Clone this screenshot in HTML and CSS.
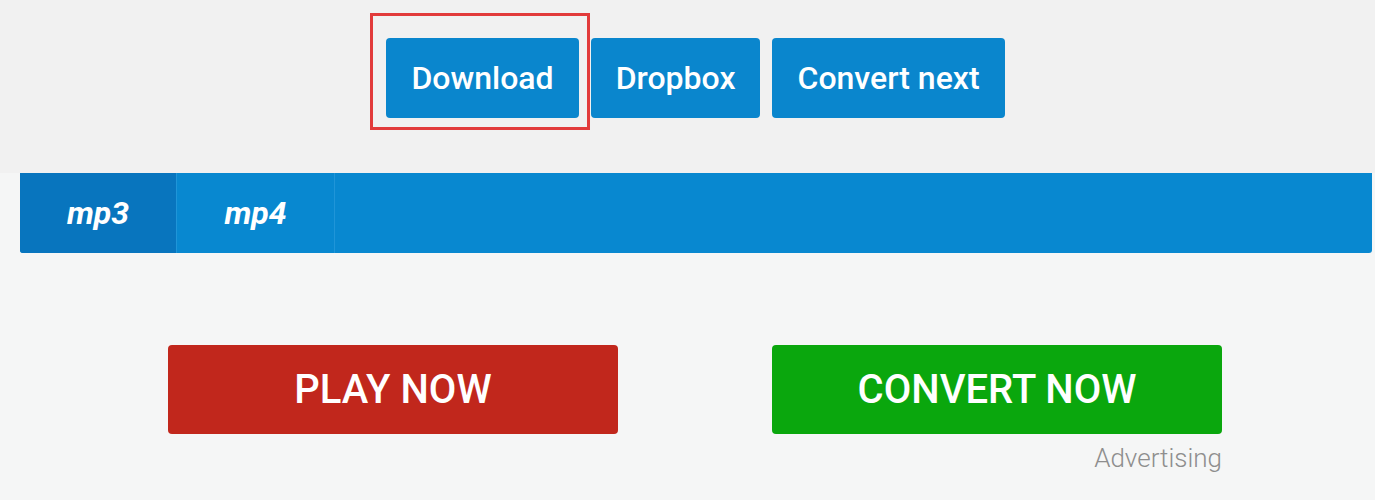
FILE: index.html
```html
<!DOCTYPE html>
<html lang="en">
<head>
  <meta charset="UTF-8">
  <title>Converter result</title>
  <link rel="stylesheet" href="styles.css">
</head>
<body>

  <div class="result">
    <div class="actions">
      <span class="highlight-wrap">
        <button class="btn">Download</button>
        <span class="highlight"></span>
      </span>
      <button class="btn">Dropbox</button>
      <button class="btn">Convert next</button>
    </div>
  </div>

  <div class="tabs">
    <div class="tab active">mp3</div>
    <div class="tab">mp4</div>
  </div>

  <div class="ads">
    <div class="ad">
      <button class="big-btn red">PLAY NOW</button>
    </div>
    <div class="ad">
      <button class="big-btn green">CONVERT NOW</button>
      <div class="ad-label">Advertising</div>
    </div>
  </div>

</body>
</html>
```

FILE: styles.css
```css
body {
  margin: 0;
  font-family: Roboto, "Liberation Sans", sans-serif;
  background: #f5f6f6;
}

.result {
  background: #f1f1f1;
  height: 173px;
  box-sizing: border-box;
  padding-top: 38px;
}

.actions {
  display: flex;
  justify-content: center;
  gap: 12px;
  padding-left: 16px;
}

.btn {
  height: 80px;
  padding: 0 25px;
  border: none;
  border-radius: 4px;
  background: #0a86cd;
  color: #fff;
  font-family: Roboto, "Liberation Sans", sans-serif;
  font-size: 32px;
  font-weight: 500;
  cursor: pointer;
}

.highlight-wrap {
  position: relative;
  display: inline-block;
}

.highlight {
  position: absolute;
  left: -16px;
  top: -25px;
  width: 220px;
  height: 117px;
  box-sizing: border-box;
  border: 3px solid #e23b3b;
  pointer-events: none;
}

.tabs {
  display: flex;
  height: 80px;
  margin: 0 3px 0 20px;
  background: #0888d0;
  border-radius: 0 0 3px 3px;
  overflow: hidden;
}

.tab {
  width: 156px;
  display: flex;
  align-items: center;
  justify-content: center;
  color: #fff;
  font-size: 32px;
  font-weight: 700;
  font-style: italic;
  border-right: 1px solid #1f95d8;
}

.tab.active {
  background: #0875be;
}

.tab + .tab {
  width: 157px;
}

.ads {
  display: grid;
  grid-template-columns: 450px 450px;
  justify-content: center;
  column-gap: 154px;
  padding: 92px 0 0 15px;
}

.big-btn {
  width: 450px;
  height: 89px;
  border: none;
  border-radius: 4px;
  color: #fff;
  font-family: Roboto, "Liberation Sans", sans-serif;
  font-size: 40px;
  font-weight: 500;
  cursor: pointer;
}

.big-btn.red {
  background: #c1271c;
}

.big-btn.green {
  background: #0aa70d;
}

.ad-label {
  text-align: right;
  margin-top: 9px;
  color: #8e8e8e;
  font-size: 26px;
  font-weight: 300;
}
```
